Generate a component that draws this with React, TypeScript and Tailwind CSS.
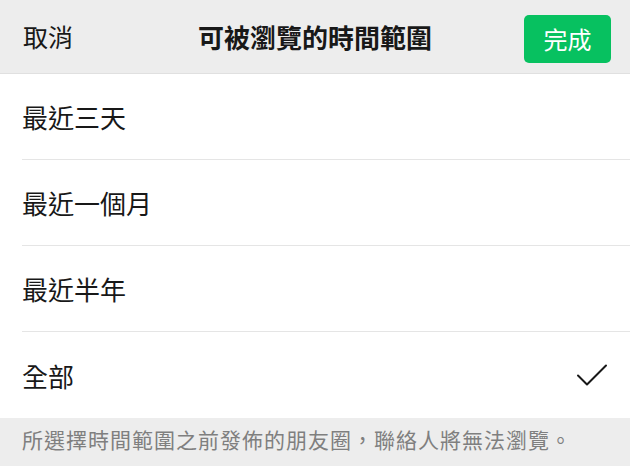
import { useState } from 'react';

const OPTIONS = ['最近三天', '最近一個月', '最近半年', '全部'];

export default function App() {
  const [selected, setSelected] = useState(3);

  return (
    <div
      className="w-[630px] h-[466px] bg-[#ededed] overflow-hidden"
      style={{ fontFamily: '"Noto Sans CJK TC", "Noto Sans", sans-serif' }}
    >
      {/* Header */}
      <div className="h-[74px] flex items-center justify-between pl-[23px] pr-[19px] border-b border-[#e0e0e0]">
        <button className="text-[25px] text-[#181818] w-[120px] text-left">取消</button>
        <h1 className="text-[26px] font-semibold text-[#181818] pr-[4px]">可被瀏覽的時間範圍</h1>
        <div className="w-[120px] flex justify-end pt-[4px]">
          <button className="w-[87px] h-[48px] rounded-[5px] bg-[#07c160] text-white text-[24px]">完成</button>
        </div>
      </div>

      {/* Options */}
      <div className="bg-white">
        {OPTIONS.map((label, i) => (
          <div key={label} className="pl-[22px]">
            <button
              onClick={() => setSelected(i)}
              className={`w-full h-[86px] flex items-center justify-between pr-[22px] text-left ${i < OPTIONS.length - 1 ? 'border-b border-[#e5e5e5]' : ''}`}
            >
              <span className="text-[26px] text-[#181818]">{label}</span>
              {selected === i && (
                <svg width="32" height="24" viewBox="0 0 32 24" fill="none">
                  <path d="M2 12.5 L11 21.5 L30 2.5" stroke="#181818" strokeWidth="2" strokeLinecap="round" strokeLinejoin="round" />
                </svg>
              )}
            </button>
          </div>
        ))}
      </div>

      {/* Footer hint */}
      <p className="pl-[22px] pt-[6px] text-[21px] text-[#7f7f7f] tracking-[1px]">
        所選擇時間範圍之前發佈的朋友圈，聯絡人將無法瀏覽。
      </p>
    </div>
  );
}
